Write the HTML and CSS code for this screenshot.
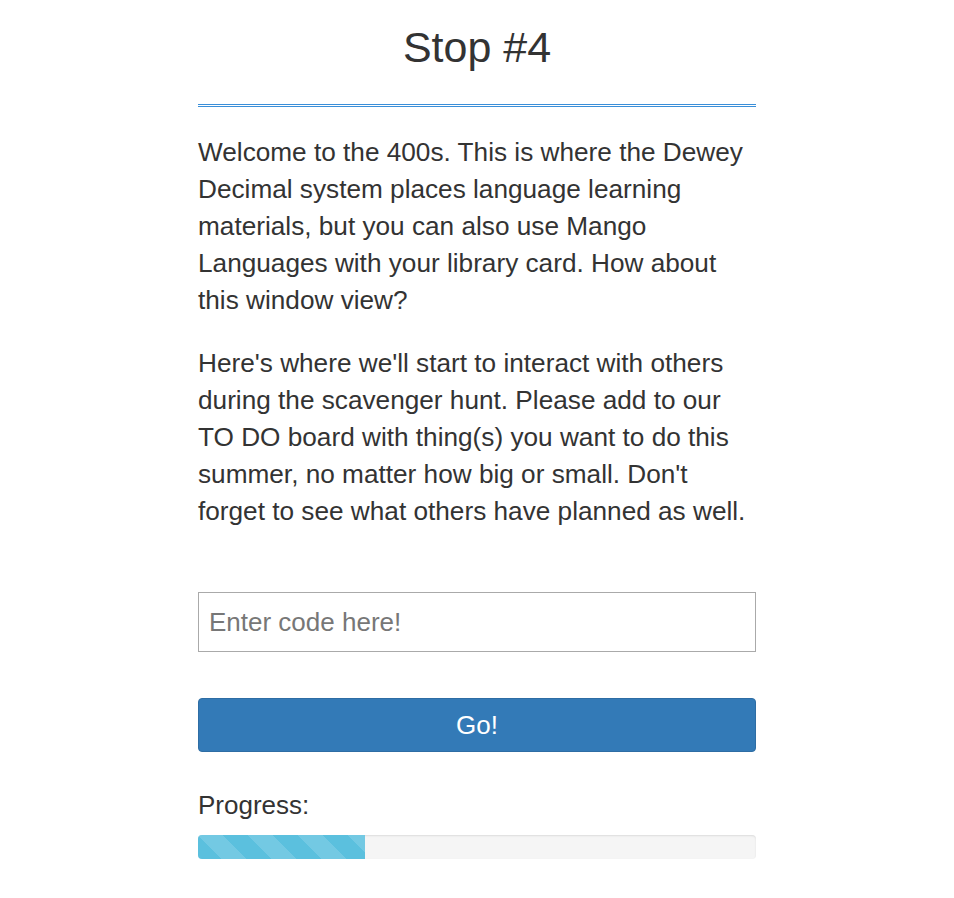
FILE: index.html
```html
<!DOCTYPE html>
<html>
<head>
<meta charset="utf-8">
<link rel="stylesheet" href="styles.css">
</head>
<body>
<div class="page">
  <h1 class="title">Stop #4</h1>
  <div class="rule"></div>
  <p class="text">Welcome to the 400s. This is where the Dewey Decimal system places language learning materials, but you can also use Mango Languages with your library card. How about this window view?</p>
  <p class="text">Here's where we'll start to interact with others during the scavenger hunt. Please add to our TO DO board with thing(s) you want to do this summer, no matter how big or small. Don't forget to see what others have planned as well.</p>
  <input class="code" type="text" placeholder="Enter code here!">
  <button class="go">Go!</button>
  <div class="label">Progress:</div>
  <div class="progress"><div class="bar" style="width:30%"></div></div>
</div>
</body>
</html>
```
FILE: styles.css
```css
html, body { margin: 0; padding: 0; background: #fff; }
body { font-family: "Liberation Sans", Arial, sans-serif; color: #333; }
.page { width: 558px; margin: 0 auto; display: flex; flex-direction: column; }
.title { font-size: 43px; font-weight: normal; text-align: center; margin: 20px 0 0; line-height: 54px; }
.rule { border-top: 1px solid #3a8fd9; border-bottom: 1px solid #3a8fd9; height: 1px; margin-top: 30px; }
.text { font-size: 26.2px; line-height: 37px; margin: 27px 0 0; }
.text + .text { margin-top: 26px; }
.code { margin-top: 62px; height: 60px; box-sizing: border-box; border: 1px solid #aaa; border-radius: 0; padding: 0 10px; font-family: inherit; font-size: 26px; color: #333; outline: none; }
.code::placeholder { color: #777; }
.go { margin-top: 46px; height: 54px; border: 1px solid #2e6da4; border-radius: 4px; background: #337ab7; color: #fff; font-family: inherit; font-size: 26px; }
.label { font-size: 26px; line-height: 30px; margin-top: 38px; }
.progress { margin-top: 15px; height: 24px; background: #f5f5f5; border-radius: 4px; overflow: hidden; box-shadow: inset 0 1px 2px rgba(0,0,0,.1); }
.bar { height: 100%; background-color: #5bc0de; background-image: linear-gradient(45deg, rgba(255,255,255,.15) 25%, transparent 25%, transparent 50%, rgba(255,255,255,.15) 50%, rgba(255,255,255,.15) 75%, transparent 75%, transparent); background-size: 50px 50px; }
```
